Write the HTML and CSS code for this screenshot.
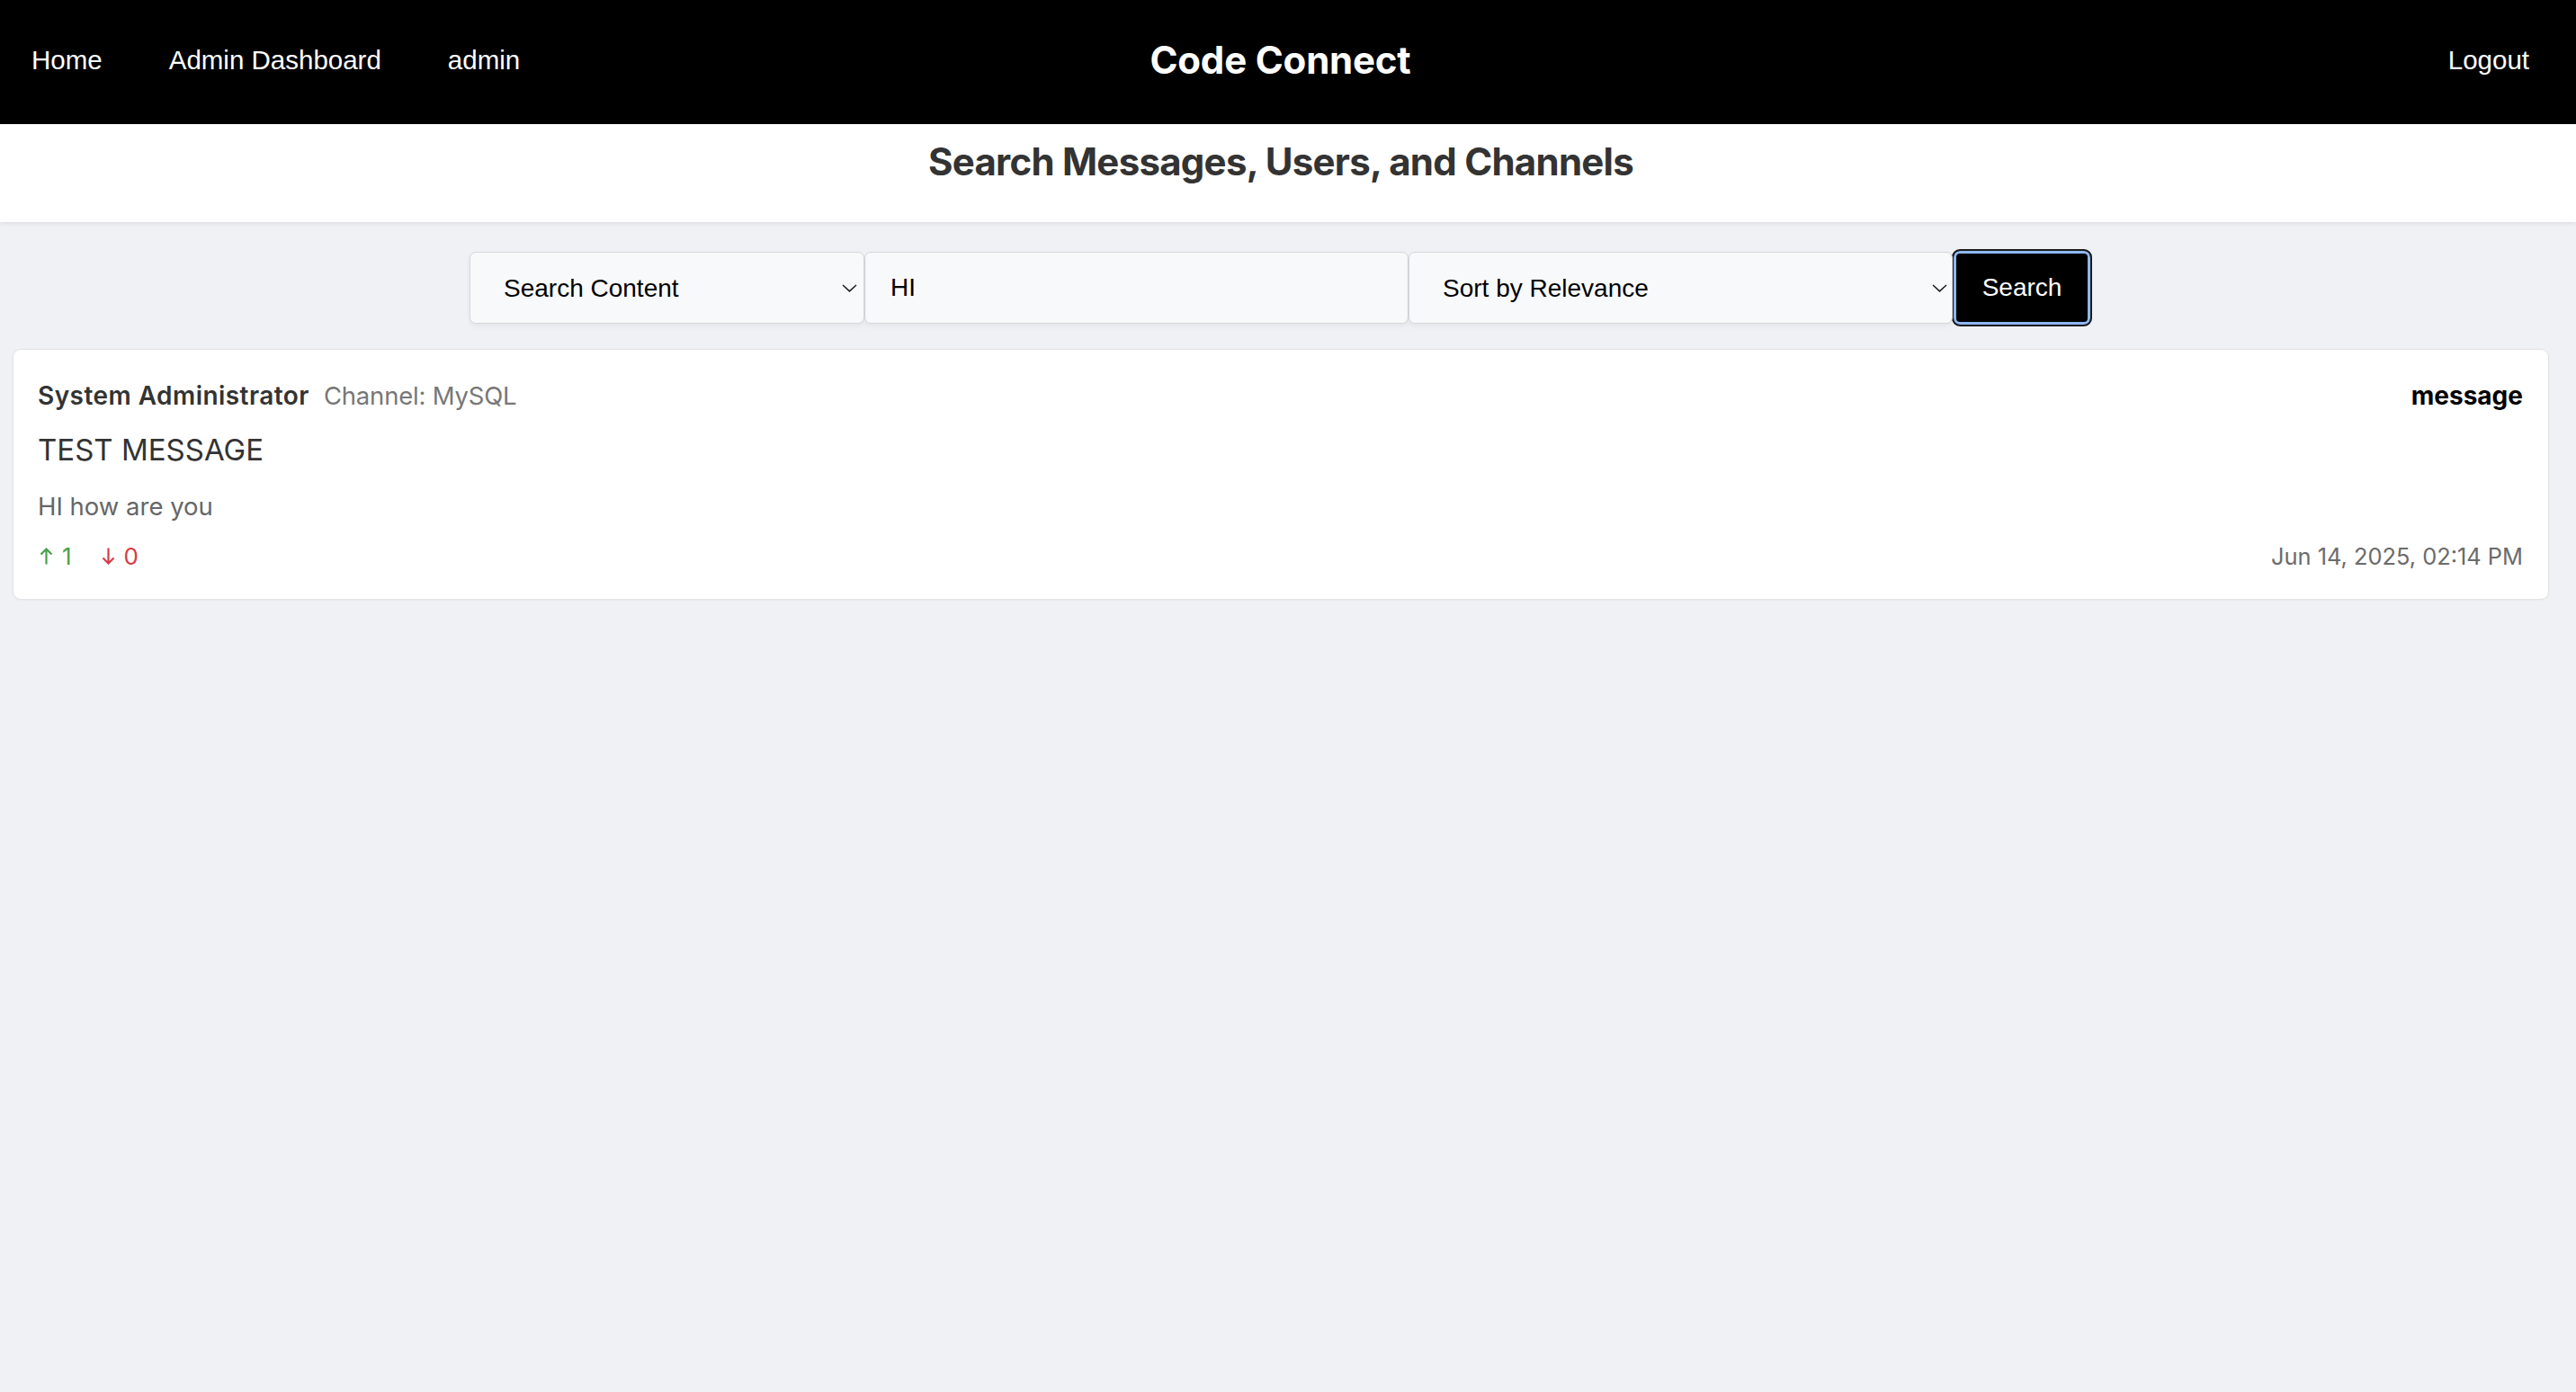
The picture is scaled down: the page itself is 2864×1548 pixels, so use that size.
FILE: index.html
```html
<!DOCTYPE html>
<html lang="en">
<head>
<meta charset="utf-8">
<title>Code Connect - Search</title>
<link rel="stylesheet" href="styles.css">
</head>
<body>
<nav class="navbar">
  <div class="nav-left">
    <a class="nav-link" href="#">Home</a>
    <a class="nav-link" href="#">Admin Dashboard</a>
    <a class="nav-link" href="#">admin</a>
  </div>
  <div class="brand">Code Connect</div>
  <div class="nav-right">
    <a class="nav-link" href="#">Logout</a>
  </div>
</nav>
<header class="page-header">
  <h1 class="page-title">Search Messages, Users, and Channels</h1>
</header>
<main class="main">
  <form class="search-bar">
    <span class="select-wrap select-type">
      <select class="field select">
        <option>Search Content</option>
      </select>
      <svg class="chev" width="17" height="9" viewBox="0 0 17 9"><polyline points="1,1 8.5,7.8 16,1" fill="none" stroke="#222" stroke-width="1.6"/></svg>
    </span>
    <input class="field text-input" type="text" value="HI">
    <span class="select-wrap select-sort">
      <select class="field select">
        <option>Sort by Relevance</option>
      </select>
      <svg class="chev" width="17" height="9" viewBox="0 0 17 9"><polyline points="1,1 8.5,7.8 16,1" fill="none" stroke="#222" stroke-width="1.6"/></svg>
    </span>
    <button class="search-btn" type="button">Search</button>
  </form>

  <article class="result-card">
    <div class="result-head">
      <div class="result-meta">
        <span class="author">System Administrator</span>
        <span class="channel">Channel: MySQL</span>
      </div>
      <span class="result-type">message</span>
    </div>
    <div class="result-title">TEST MESSAGE</div>
    <div class="result-body">HI how are you</div>
    <div class="result-foot">
      <div class="votes">
        <span class="vote up">
          <svg width="15" height="19" viewBox="0 0 15 19"><path d="M7.5 18.5V1.5M1.5 7.5L7.5 1.5L13.5 7.5" fill="none" stroke="currentColor" stroke-width="2.2"/></svg>
          <span>1</span>
        </span>
        <span class="vote down">
          <svg width="15" height="19" viewBox="0 0 15 19"><path d="M7.5 0.5V17.5M1.5 11.5L7.5 17.5L13.5 11.5" fill="none" stroke="currentColor" stroke-width="2.2"/></svg>
          <span>0</span>
        </span>
      </div>
      <span class="result-date">Jun 14, 2025, 02:14 PM</span>
    </div>
  </article>
</main>
</body>
</html>
```

FILE: styles.css
```css
* { box-sizing: border-box; }

html, body {
  margin: 0;
  padding: 0;
}

body {
  background: #f0f1f5;
  font-family: Inter, "Liberation Sans", Arial, sans-serif;
  color: #333;
  min-height: 1548px;
}

.navbar {
  background: #000;
  height: 138px;
  padding: 0 52px 0 35px;
  display: grid;
  grid-template-columns: 1fr auto 1fr;
  align-items: center;
}

.nav-left {
  display: flex;
  gap: 74px;
  align-items: center;
}

.nav-right {
  display: flex;
  justify-content: flex-end;
}

.nav-link {
  color: #fff;
  text-decoration: none;
  font-family: "Liberation Sans", Arial, sans-serif;
  font-size: 29.5px;
  line-height: 1;
  padding-bottom: 5px;
}

.brand {
  color: #fff;
  font-family: Inter, sans-serif;
  font-weight: 700;
  font-size: 42px;
  line-height: 1;
  letter-spacing: -0.2px;
  padding-bottom: 5px;
}

.page-header {
  background: #fff;
  height: 109px;
  padding: 15px 16px 0 0;
  box-shadow: 0 2px 5px rgba(0, 0, 0, 0.08);
}

.page-title {
  margin: 0;
  text-align: center;
  font-family: Inter, sans-serif;
  font-weight: 700;
  font-size: 42px;
  line-height: 54px;
  color: #333;
  letter-spacing: -0.75px;
}

.main {
  margin: 0 30px 0 14px;
  padding-top: 30px;
}

.search-bar {
  display: flex;
  justify-content: center;
  align-items: center;
  margin: 0 0 25px 0;
}

.select-wrap {
  position: relative;
  display: block;
}

.select-type { width: 439px; }
.select-sort { width: 605px; }

.field {
  height: 80px;
  border: 1px solid #d5d6d9;
  border-radius: 7px;
  background: #f8f9fb;
  font-family: "Liberation Sans", Arial, sans-serif;
  font-size: 28px;
  color: #000;
  box-shadow: 0 3px 6px rgba(0, 0, 0, 0.05);
  outline: none;
}

.select {
  -webkit-appearance: none;
  appearance: none;
  width: 100%;
  padding: 0 40px 0 37px;
  margin: 0;
}

.chev {
  position: absolute;
  right: 8px;
  top: 36px;
  pointer-events: none;
}

.select-sort .chev { right: 6px; }

.text-input {
  width: 605px;
  padding: 0 28px;
  margin: 0;
}

.search-btn {
  width: 156px;
  height: 86px;
  margin-left: -1px;
  background: #000;
  color: #fff;
  border: 2px solid #1c1c1c;
  border-radius: 9px;
  box-shadow: inset 0 0 0 3px #8fb7f3;
  font-family: "Liberation Sans", Arial, sans-serif;
  font-size: 28px;
  padding: 0;
  cursor: pointer;
}

.result-card {
  background: #fff;
  border: 1px solid #e2e3e6;
  border-radius: 9px;
  padding: 30px 28px 28px 27px;
  box-shadow: 0 1px 3px rgba(0, 0, 0, 0.03);
}

.result-head {
  display: flex;
  justify-content: space-between;
  align-items: baseline;
  font-size: 28px;
  line-height: 42px;
}

.result-meta {
  display: flex;
  align-items: baseline;
  gap: 16px;
}

.author {
  font-weight: 600;
  color: #333;
  letter-spacing: 0.45px;
}

.channel {
  color: #777;
  font-size: 27.5px;
  letter-spacing: -0.2px;
}

.result-type {
  font-weight: 700;
  color: #000;
}

.result-title {
  margin-top: 14px;
  font-size: 33px;
  line-height: 51px;
  color: #333;
}

.result-body {
  margin-top: 16px;
  font-size: 27.5px;
  line-height: 42px;
  color: #666;
}

.result-foot {
  margin-top: 15px;
  display: flex;
  justify-content: space-between;
  align-items: center;
  font-size: 26px;
  line-height: 39px;
}

.votes {
  display: flex;
  align-items: center;
  gap: 33px;
  padding-left: 2px;
}

.vote {
  display: flex;
  align-items: center;
  gap: 10px;
}

.vote svg { display: block; }

.vote.up { color: #46a24a; }
.vote.down { color: #d33d48; }

.result-date {
  color: #6b6b6b;
  font-size: 25.4px;
}
```
